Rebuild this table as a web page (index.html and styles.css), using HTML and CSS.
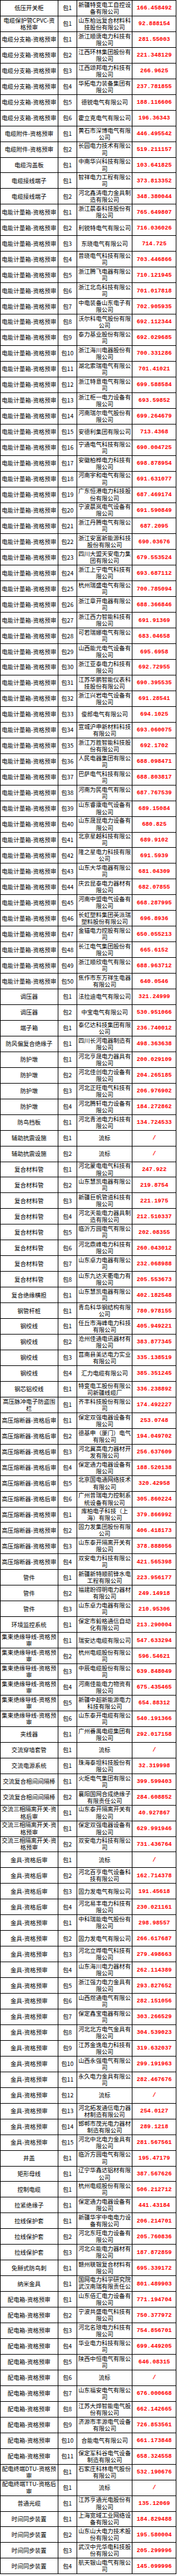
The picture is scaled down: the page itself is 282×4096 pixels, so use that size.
FILE: index.html
```html
<!DOCTYPE html>
<html lang="zh-CN">
<head>
<meta charset="utf-8">
<title>中标候选人公示</title>
<link rel="stylesheet" href="styles.css">
</head>
<body>
<div class="sheet">
<div class="r"><div>低压开关柜</div><div>包1</div><div>新疆特变电工自控设备有限公司</div><div>166.458492</div></div>
<div class="r"><div>电缆保护管CPVC-资格预审</div><div>包1</div><div>山东柏远复合材料科技股份有限公司</div><div>92.888154</div></div>
<div class="r"><div>电缆分支箱-资格预审</div><div>包1</div><div>浙江顺唐电力科技有限公司</div><div>281.55003</div></div>
<div class="r"><div>电缆分支箱-资格预审</div><div>包2</div><div>江西环林集团股份有限公司</div><div>221.348129</div></div>
<div class="r"><div>电缆分支箱-资格预审</div><div>包3</div><div>江西颂邦电力科技有限公司</div><div>266.9625</div></div>
<div class="r"><div>电缆分支箱-资格预审</div><div>包4</div><div>华拓电力装备集团有限公司</div><div>237.781855</div></div>
<div class="r"><div>电缆分支箱-资格预审</div><div>包5</div><div>德锐电气有限公司</div><div>188.116606</div></div>
<div class="r"><div>电缆分支箱-资格预审</div><div>包6</div><div>霍立克电气有限公司</div><div>196.36343</div></div>
<div class="r"><div>电缆附件-资格预审</div><div>包1</div><div>黄石市深博电气有限公司</div><div>446.495542</div></div>
<div class="r"><div>电缆附件-资格预审</div><div>包2</div><div>长园电力技术有限公司</div><div>519.211157</div></div>
<div class="r"><div>电缆沟盖板</div><div>包1</div><div>中南华兴科技有限公司</div><div>103.641825</div></div>
<div class="r"><div>电缆接线端子</div><div>包1</div><div>智祥电力工程有限公司</div><div>373.813352</div></div>
<div class="r"><div>电缆接线端子</div><div>包2</div><div>河北鑫涛电力金具制造有限公司</div><div>348.380044</div></div>
<div class="r"><div>电能计量箱-资格预审</div><div>包1</div><div>浙江晨泰科技股份有限公司</div><div>765.649807</div></div>
<div class="r"><div>电能计量箱-资格预审</div><div>包2</div><div>利锐特电气有限公司</div><div>716.036026</div></div>
<div class="r"><div>电能计量箱-资格预审</div><div>包3</div><div>东晓电气有限公司</div><div>714.725</div></div>
<div class="r"><div>电能计量箱-资格预审</div><div>包4</div><div>普晓电气科技有限公司</div><div>703.446866</div></div>
<div class="r"><div>电能计量箱-资格预审</div><div>包5</div><div>浙江腾飞电器有限公司</div><div>710.121945</div></div>
<div class="r"><div>电能计量箱-资格预审</div><div>包6</div><div>浙江北岛科技有限公司</div><div>701.017818</div></div>
<div class="r"><div>电能计量箱-资格预审</div><div>包7</div><div>中电装备山东电子有限公司</div><div>702.905935</div></div>
<div class="r"><div>电能计量箱-资格预审</div><div>包8</div><div>沃尔科电气股份有限公司</div><div>692.112344</div></div>
<div class="r"><div>电能计量箱-资格预审</div><div>包9</div><div>泰力基业股份有限公司</div><div>692.029685</div></div>
<div class="r"><div>电能计量箱-资格预审</div><div>包10</div><div>浙江海川电器股份有限公司</div><div>700.331286</div></div>
<div class="r"><div>电能计量箱-资格预审</div><div>包11</div><div>湖北索瑞电气有限公司</div><div>701.41021</div></div>
<div class="r"><div>电能计量箱-资格预审</div><div>包12</div><div>浙江特意电气有限公司</div><div>699.588584</div></div>
<div class="r"><div>电能计量箱-资格预审</div><div>包13</div><div>浙江柜一电力设备有限公司</div><div>693.59852</div></div>
<div class="r"><div>电能计量箱-资格预审</div><div>包14</div><div>河南瑞尔电气股份有限公司</div><div>699.264679</div></div>
<div class="r"><div>电能计量箱-资格预审</div><div>包15</div><div>安德利集团有限公司</div><div>713.4368</div></div>
<div class="r"><div>电能计量箱-资格预审</div><div>包16</div><div>宁通电气科技有限公司</div><div>690.004725</div></div>
<div class="r"><div>电能计量箱-资格预审</div><div>包17</div><div>安徽柏桦电力科技有限公司</div><div>698.878954</div></div>
<div class="r"><div>电能计量箱-资格预审</div><div>包18</div><div>河南宇和电气有限公司</div><div>691.631077</div></div>
<div class="r"><div>电能计量箱-资格预审</div><div>包19</div><div>广东恒港电力科技股份有限公司</div><div>687.469174</div></div>
<div class="r"><div>电能计量箱-资格预审</div><div>包20</div><div>宁波晨岚电气设备有限公司</div><div>691.590849</div></div>
<div class="r"><div>电能计量箱-资格预审</div><div>包21</div><div>浙江丹腾电气有限公司</div><div>687.2095</div></div>
<div class="r"><div>电能计量箱-资格预审</div><div>包22</div><div>浙江安富新能源科技股份有限公司</div><div>690.03676</div></div>
<div class="r"><div>电能计量箱-资格预审</div><div>包23</div><div>四川大盟天安电力集团有限公司</div><div>679.553524</div></div>
<div class="r"><div>电能计量箱-资格预审</div><div>包24</div><div>浙江上宁电气科技有限公司</div><div>693.687112</div></div>
<div class="r"><div>电能计量箱-资格预审</div><div>包25</div><div>杭州瑞盛电气有限公司</div><div>700.785094</div></div>
<div class="r"><div>电能计量箱-资格预审</div><div>包26</div><div>浙江章开电器有限公司</div><div>688.366846</div></div>
<div class="r"><div>电能计量箱-资格预审</div><div>包27</div><div>浙江西力智能科技有限公司</div><div>691.91369</div></div>
<div class="r"><div>电能计量箱-资格预审</div><div>包28</div><div>可若瑞娜电气有限公司</div><div>683.04658</div></div>
<div class="r"><div>电能计量箱-资格预审</div><div>包29</div><div>山西能元电气设备有限公司</div><div>695.6958</div></div>
<div class="r"><div>电能计量箱-资格预审</div><div>包30</div><div>浙江亚泰电力科技有限公司</div><div>692.72955</div></div>
<div class="r"><div>电能计量箱-资格预审</div><div>包31</div><div>江苏华鹏智能仪表科技股份有限公司</div><div>690.395535</div></div>
<div class="r"><div>电能计量箱-资格预审</div><div>包32</div><div>浙江兴岩电气设备有限公司</div><div>691.28541</div></div>
<div class="r"><div>电能计量箱-资格预审</div><div>包33</div><div>俊郎电气有限公司</div><div>694.1025</div></div>
<div class="r"><div>电能计量箱-资格预审</div><div>包34</div><div>宣城沪申新材料科技有限公司</div><div>693.060075</div></div>
<div class="r"><div>电能计量箱-资格预审</div><div>包35</div><div>浙江万胜智能科技股份有限公司</div><div>692.1702</div></div>
<div class="r"><div>电能计量箱-资格预审</div><div>包36</div><div>人民电器集团有限公司</div><div>688.098471</div></div>
<div class="r"><div>电能计量箱-资格预审</div><div>包37</div><div>巴萨电气科技有限公司</div><div>688.803817</div></div>
<div class="r"><div>电能计量箱-资格预审</div><div>包38</div><div>河南为民电气有限公司</div><div>687.767539</div></div>
<div class="r"><div>电能计量箱-资格预审</div><div>包39</div><div>山东睿康电气设备有限公司</div><div>689.15084</div></div>
<div class="r"><div>电能计量箱-资格预审</div><div>包40</div><div>山东晟昆电力设备有限公司</div><div>680.825</div></div>
<div class="r"><div>电能计量箱-资格预审</div><div>包41</div><div>北京星越科技有限公司</div><div>689.9102</div></div>
<div class="r"><div>电能计量箱-资格预审</div><div>包42</div><div>隆之星电力科技有限公司</div><div>691.5939</div></div>
<div class="r"><div>电能计量箱-资格预审</div><div>包43</div><div>山东大华电器有限公司</div><div>681.04309</div></div>
<div class="r"><div>电能计量箱-资格预审</div><div>包44</div><div>庆云昆泰电力器材有限公司</div><div>682.07855</div></div>
<div class="r"><div>电能计量箱-资格预审</div><div>包45</div><div>河南中盟电气设备有限公司</div><div>668.287995</div></div>
<div class="r"><div>电能计量箱-资格预审</div><div>包46</div><div>长虹塑料集团英派瑞塑料股份有限公司</div><div>696.8936</div></div>
<div class="r"><div>电能计量箱-资格预审</div><div>包47</div><div>金锚电力控股有限公司</div><div>650.055213</div></div>
<div class="r"><div>电能计量箱-资格预审</div><div>包48</div><div>长江电气集团股份有限公司</div><div>665.6152</div></div>
<div class="r"><div>电能计量箱-资格预审</div><div>包49</div><div>浙江顺欣电气有限公司</div><div>688.963712</div></div>
<div class="r"><div>电能计量箱-资格预审</div><div>包50</div><div>焦作市东方祥生电器有限公司</div><div>640.0546</div></div>
<div class="r"><div>调压器</div><div>包1</div><div>法拉迪电气有限公司</div><div>321.24999</div></div>
<div class="r"><div>调压器</div><div>包2</div><div>中宝电气有限公司</div><div>530.951066</div></div>
<div class="r"><div>端子箱</div><div>包1</div><div>泰亿达科技集团有限公司</div><div>236.740012</div></div>
<div class="r"><div>防风偏复合绝缘子</div><div>包1</div><div>四川长河电器制造有限公司</div><div>498.363638</div></div>
<div class="r"><div>防护墩</div><div>包1</div><div>河北亨晟电力器具有限公司</div><div>200.029109</div></div>
<div class="r"><div>防护墩</div><div>包2</div><div>河北佳创电力设备有限公司</div><div>204.265185</div></div>
<div class="r"><div>防护墩</div><div>包3</div><div>河北正旺电气科技有限公司</div><div>206.976902</div></div>
<div class="r"><div>防护墩</div><div>包4</div><div>河北腾轩电力设备有限公司</div><div>184.272862</div></div>
<div class="r"><div>防鸟挡板</div><div>包1</div><div>河北青池电力科技有限公司</div><div>134.724533</div></div>
<div class="r"><div>辅助抗震设施</div><div>包1</div><div>流标</div><div>/</div></div>
<div class="r"><div>辅助抗震设施</div><div>包2</div><div>流标</div><div>/</div></div>
<div class="r"><div>复合材料管</div><div>包1</div><div>河北蒙电电气科技有限公司</div><div>247.922</div></div>
<div class="r"><div>复合材料管</div><div>包2</div><div>山东慧凯电器有限公司</div><div>219.8754</div></div>
<div class="r"><div>复合材料管</div><div>包3</div><div>新疆巨帆管道科技有限公司</div><div>221.1975</div></div>
<div class="r"><div>复合材料管</div><div>包4</div><div>河北天能电力器具制造有限公司</div><div>212.510337</div></div>
<div class="r"><div>复合材料管</div><div>包5</div><div>临沂方圆电气有限公司</div><div>202.08355</div></div>
<div class="r"><div>复合材料管</div><div>包6</div><div>河北鼎峰电力科技有限公司</div><div>260.043012</div></div>
<div class="r"><div>复合材料管</div><div>包7</div><div>山东卓力电器有限公司</div><div>232.068988</div></div>
<div class="r"><div>复合材料管</div><div>包8</div><div>山东九达天衢电力有限公司</div><div>205.553673</div></div>
<div class="r"><div>复合绝缘横担</div><div>包1</div><div>山东慧凯电器有限公司</div><div>402.182548</div></div>
<div class="r"><div>钢管杆桩</div><div>包1</div><div>青岛科华钢结构有限公司</div><div>780.978155</div></div>
<div class="r"><div>钢绞线</div><div>包1</div><div>任丘市海峰电力科技有限公司</div><div>405.949221</div></div>
<div class="r"><div>钢绞线</div><div>包2</div><div>沧州佳通电讯器材有限公司</div><div>383.877345</div></div>
<div class="r"><div>钢绞线</div><div>包3</div><div>莒南县美达电力实业有限公司</div><div>335.138519</div></div>
<div class="r"><div>钢绞线</div><div>包4</div><div>汇力电缆有限公司</div><div>385.351245</div></div>
<div class="r"><div>钢芯铝绞线</div><div>包1</div><div>特变电工股份有限公司新疆线缆厂</div><div>336.238892</div></div>
<div class="r"><div>高压脉冲电子防盗围栏</div><div>包1</div><div>齐丰科技股份有限公司</div><div>174.492227</div></div>
<div class="r"><div>高压熔断器-资格后审</div><div>包1</div><div>保定双强电器设备有限公司</div><div>253.0748</div></div>
<div class="r"><div>高压熔断器-资格后审</div><div>包2</div><div>德基申（厦门）电气有限公司</div><div>194.049702</div></div>
<div class="r"><div>高压熔断器-资格后审</div><div>包3</div><div>河北冀高电力器材开发有限公司</div><div>256.637609</div></div>
<div class="r"><div>高压熔断器-资格后审</div><div>包4</div><div>保定通力电器设备有限公司</div><div>188.520138</div></div>
<div class="r"><div>高压熔断器-资格后审</div><div>包5</div><div>北京国电通网络技术有限公司</div><div>320.42958</div></div>
<div class="r"><div>高压熔断器-资格后审</div><div>包6</div><div>广州普瑞电力控制系统设备有限公司</div><div>305.860224</div></div>
<div class="r"><div>高压熔断器-资格预审</div><div>包1</div><div>库柏电子科技（上海）有限公司</div><div>379.866992</div></div>
<div class="r"><div>高压熔断器-资格预审</div><div>包2</div><div>固力发集团股份有限公司</div><div>406.418173</div></div>
<div class="r"><div>高压熔断器-资格预审</div><div>包3</div><div>山东泰开隔离开关有限公司</div><div>378.888056</div></div>
<div class="r"><div>高压熔断器-资格预审</div><div>包4</div><div>双安电力科技有限公司</div><div>421.565398</div></div>
<div class="r"><div>管件</div><div>包1</div><div>新疆新特顺前锋水电工程有限公司</div><div>223.956177</div></div>
<div class="r"><div>管件</div><div>包2</div><div>福建盼得明电力器材有限公司</div><div>249.14918</div></div>
<div class="r"><div>管件</div><div>包3</div><div>山东卓力电器有限公司</div><div>210.95306</div></div>
<div class="r"><div>环境监控系统</div><div>包1</div><div>保定市毅格通信自动化有限公司</div><div>213.290004</div></div>
<div class="r"><div>集束绝缘导线-资格预审</div><div>包1</div><div>瑞安达电缆有限公司</div><div>547.633294</div></div>
<div class="r"><div>集束绝缘导线-资格预审</div><div>包2</div><div>杭州电缆股份有限公司</div><div>596.54621</div></div>
<div class="r"><div>集束绝缘导线-资格预审</div><div>包3</div><div>中辰电缆股份有限公司</div><div>639.848049</div></div>
<div class="r"><div>集束绝缘导线-资格预审</div><div>包4</div><div>河南佳能电力物资有限公司</div><div>675.435465</div></div>
<div class="r"><div>集束绝缘导线-资格预审</div><div>包5</div><div>新疆中超新能源电力科技有限公司</div><div>654.88312</div></div>
<div class="r"><div>集束绝缘导线-资格预审</div><div>包6</div><div>山东泰开电缆有限公司</div><div>540.191366</div></div>
<div class="r"><div>夹线器</div><div>包1</div><div>广州番禺电缆集团有限公司</div><div>292.017158</div></div>
<div class="r"><div>交流穿墙套管</div><div>包1</div><div>流标</div><div>/</div></div>
<div class="r"><div>交流电源系统</div><div>包1</div><div>珠海泰坦科技股份有限公司</div><div>32.319998</div></div>
<div class="r"><div>交流复合相间间隔棒</div><div>包1</div><div>火炬电气集团有限公司</div><div>399.599403</div></div>
<div class="r"><div>交流复合相间间隔棒</div><div>包2</div><div>襄阳国网合成绝缘子有限责任公司</div><div>284.608852</div></div>
<div class="r"><div>交流三相隔离开关-资格后审</div><div>包1</div><div>山东泰开隔离开关有限公司</div><div>40.927867</div></div>
<div class="r"><div>交流三相隔离开关-资格预审</div><div>包1</div><div>保定双强电器设备有限公司</div><div>629.991946</div></div>
<div class="r"><div>交流三相隔离开关-资格预审</div><div>包2</div><div>双安电力科技有限公司</div><div>731.436764</div></div>
<div class="r"><div>金具-资格后审</div><div>包1</div><div>流标</div><div>/</div></div>
<div class="r"><div>金具-资格后审</div><div>包2</div><div>河北百亨电气设备科技有限公司</div><div>162.714378</div></div>
<div class="r"><div>金具-资格后审</div><div>包3</div><div>固力发电气有限公司</div><div>191.45618</div></div>
<div class="r"><div>金具-资格后审</div><div>包4</div><div>河北易丰电力科技有限公司</div><div>230.021161</div></div>
<div class="r"><div>金具-资格预审</div><div>包1</div><div>中科瑞能电气股份有限公司</div><div>298.98557</div></div>
<div class="r"><div>金具-资格预审</div><div>包2</div><div>固力发电气有限公司</div><div>266.617687</div></div>
<div class="r"><div>金具-资格预审</div><div>包3</div><div>河北立晔电气科技有限公司</div><div>279.498663</div></div>
<div class="r"><div>金具-资格预审</div><div>包4</div><div>山东海川电力器材有限公司</div><div>262.114389</div></div>
<div class="r"><div>金具-资格预审</div><div>包5</div><div>浙江强力电力金具有限公司</div><div>293.827652</div></div>
<div class="r"><div>金具-资格预审</div><div>包6</div><div>山西煜通电气有限公司</div><div>282.151056</div></div>
<div class="r"><div>金具-资格预审</div><div>包7</div><div>保定鑫宝电器有限公司</div><div>303.266529</div></div>
<div class="r"><div>金具-资格预审</div><div>包8</div><div>河北北方电气金具有限公司</div><div>304.539023</div></div>
<div class="r"><div>金具-资格预审</div><div>包9</div><div>江苏金逸电力科技有限公司</div><div>319.632037</div></div>
<div class="r"><div>金具-资格预审</div><div>包10</div><div>山西永强电气有限公司</div><div>299.191963</div></div>
<div class="r"><div>金具-资格预审</div><div>包11</div><div>永久电力金具有限公司</div><div>282.467676</div></div>
<div class="r"><div>金具-资格预审</div><div>包12</div><div>流标</div><div>/</div></div>
<div class="r"><div>金具-资格预审</div><div>包13</div><div>河北拓发通信电力器材制造有限公司</div><div>254.0127</div></div>
<div class="r"><div>金具-资格预审</div><div>包14</div><div>邯郸市茂光电力器材制造有限公司</div><div>289.1218</div></div>
<div class="r"><div>金具-资格预审</div><div>包15</div><div>河北中北电力金具有限公司</div><div>281.567561</div></div>
<div class="r"><div>井盖</div><div>包1</div><div>临沂方圆电气有限公司</div><div>195.47179</div></div>
<div class="r"><div>矩形母线</div><div>包1</div><div>辽宁华鑫达铝材有限公司</div><div>387.567626</div></div>
<div class="r"><div>控制电缆</div><div>包1</div><div>杭州电缆股份有限公司</div><div>506.212712</div></div>
<div class="r"><div>拉紧绝缘子</div><div>包1</div><div>保定通力电器设备有限公司</div><div>441.43184</div></div>
<div class="r"><div>拉线保护套</div><div>包1</div><div>新疆华宇中电电力设备有限公司</div><div>206.214701</div></div>
<div class="r"><div>拉线保护套</div><div>包2</div><div>河北东旺电力设备有限公司</div><div>205.760836</div></div>
<div class="r"><div>拉线保护套</div><div>包3</div><div>河北众能电力器材有限公司</div><div>187.872859</div></div>
<div class="r"><div>免掰式防鸟刺</div><div>包1</div><div>赣州联银复合材料有限公司</div><div>695.339172</div></div>
<div class="r"><div>纳米金具</div><div>包1</div><div>国网电力科学研究院武汉南瑞有限责任公司</div><div>801.489903</div></div>
<div class="r"><div>配电箱-资格预审</div><div>包1</div><div>山东佰汇电力设备有限公司</div><div>771.194704</div></div>
<div class="r"><div>配电箱-资格预审</div><div>包2</div><div>宁波共盛电气科技有限公司</div><div>750.377972</div></div>
<div class="r"><div>配电箱-资格预审</div><div>包3</div><div>河北名琅电力科技有限公司</div><div>754.856701</div></div>
<div class="r"><div>配电箱-资格预审</div><div>包4</div><div>华业电力科技有限公司</div><div>699.449205</div></div>
<div class="r"><div>配电箱-资格预审</div><div>包5</div><div>陕西中恒电气有限公司</div><div>646.08315</div></div>
<div class="r"><div>配电箱-资格预审</div><div>包6</div><div>流标</div><div>/</div></div>
<div class="r"><div>配电箱-资格预审</div><div>包7</div><div>山东福安电气有限公司</div><div>676.000668</div></div>
<div class="r"><div>配电箱-资格预审</div><div>包8</div><div>江苏大烨智能电气股份有限公司</div><div>662.142665</div></div>
<div class="r"><div>配电箱-资格预审</div><div>包9</div><div>济源市丰源电气设备有限公司</div><div>726.853561</div></div>
<div class="r"><div>配电箱-资格预审</div><div>包10</div><div>合能电气有限公司</div><div>661.173848</div></div>
<div class="r"><div>配电箱-资格预审</div><div>包11</div><div>保定军科谷电气设备制造有限公司</div><div>658.324558</div></div>
<div class="r"><div>配电终端DTU-资格预审</div><div>包1</div><div>石家庄科林电气股份有限公司</div><div>532.190676</div></div>
<div class="r"><div>配电终端TTU-资格后审</div><div>包1</div><div>流标</div><div>/</div></div>
<div class="r"><div>普通光缆</div><div>包1</div><div>江苏亨通光电股份有限公司</div><div>135.12069</div></div>
<div class="r"><div>时间同步装置</div><div>包1</div><div>上海宽域工业网络设备有限公司</div><div>184.829488</div></div>
<div class="r"><div>时间同步装置</div><div>包2</div><div>山东山大电力技术股份有限公司</div><div>195.580004</div></div>
<div class="r"><div>时间同步装置</div><div>包3</div><div>武汉中元华电科技股份有限公司</div><div>205.299996</div></div>
<div class="r"><div>时间同步装置</div><div>包4</div><div>航天银山电气有限公司</div><div>145.099996</div></div>
</div>
</body>
</html>
```

FILE: styles.css
```css
html, body {
  margin: 0;
  padding: 0;
  background: #fff;
}

.sheet {
  width: 281.3px;
  border-top: 1px solid #000;
  font-family: "Noto Sans CJK SC", "Noto Sans", sans-serif;
  font-size: 9.3px;
  line-height: 11.1px;
  color: #000;
}

.r {
  display: grid;
  grid-template-columns: 92.5px 30.6px 88px 70.2px;
  height: 24.96px;
}

.r > div {
  box-sizing: border-box;
  display: flex;
  align-items: center;
  align-items: safe center;
  justify-content: center;
  text-align: center;
  overflow: hidden;
  padding: 0 1px;
  border-right: 1px solid #000;
  border-bottom: 1px solid #000;
  background: #fff;
}

.r > div:first-child {
  border-left: 1px solid #000;
}

.r > div:last-child {
  color: #f00;
  font-family: "Liberation Mono", "DejaVu Sans Mono", monospace;
  font-weight: bold;
}
```
